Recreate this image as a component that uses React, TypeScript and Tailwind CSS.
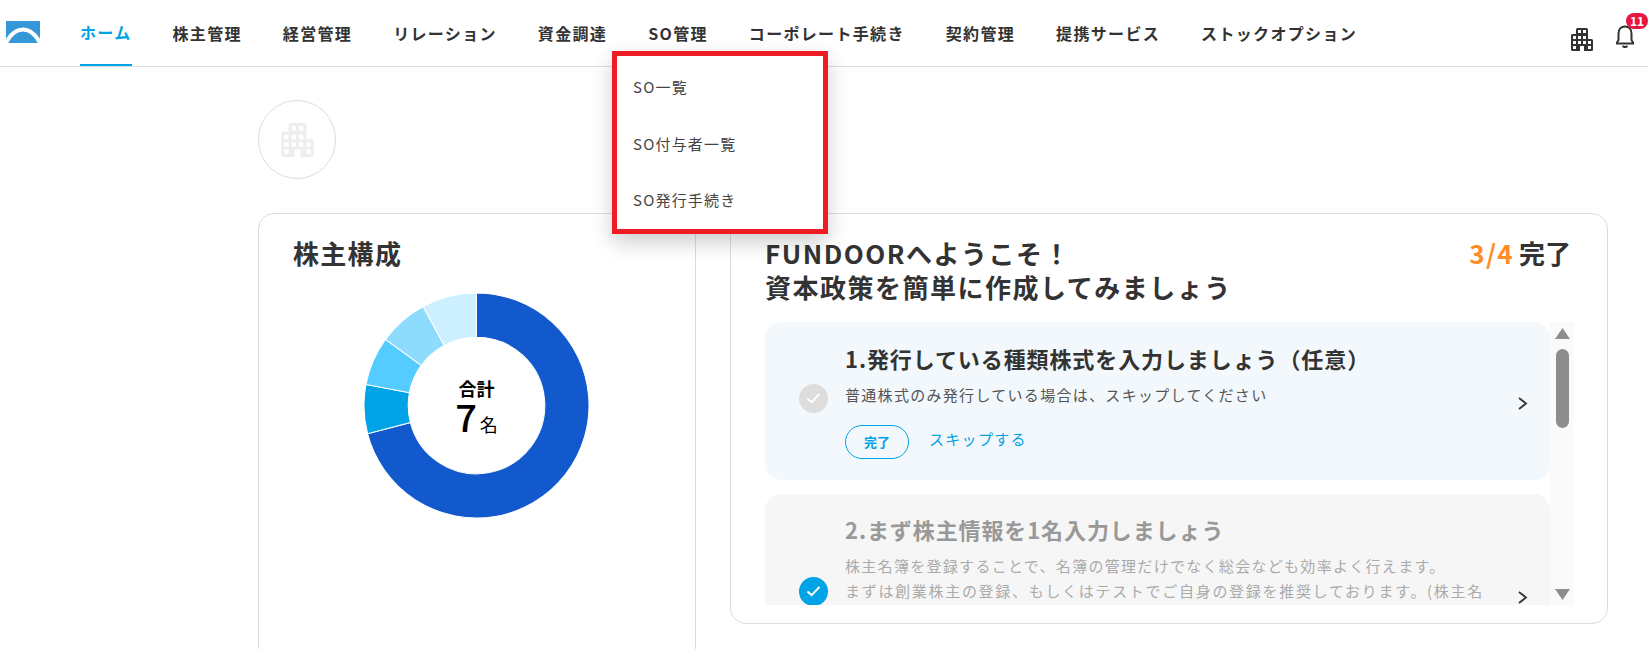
import React from 'react';

const navItems = ['ホーム', '株主管理', '経営管理', 'リレーション', '資金調達', 'SO管理', 'コーポレート手続き', '契約管理', '提携サービス', 'ストックオプション'];

const segments = [
  { from: 0, to: 255.5, color: '#1159cc' },
  { from: 255.5, to: 280.8, color: '#00a3e5' },
  { from: 280.8, to: 306, color: '#55ccff' },
  { from: 306, to: 331.7, color: '#8edcfd' },
  { from: 331.7, to: 360, color: '#ccf0ff' },
];

function arc(from: number, to: number) {
  const c = 112;
  const R = 112;
  const r = 68;
  const pt = (rad: number, deg: number) => {
    const a = ((deg - 90) * Math.PI) / 180;
    return `${(c + rad * Math.cos(a)).toFixed(2)} ${(c + rad * Math.sin(a)).toFixed(2)}`;
  };
  const large = to - from > 180 ? 1 : 0;
  return `M${pt(R, from)} A${R} ${R} 0 ${large} 1 ${pt(R, to)} L${pt(r, to)} A${r} ${r} 0 ${large} 0 ${pt(r, from)} Z`;
}

function BuildingIcon({ color, hole, className }: { color: string; hole: string; className: string }) {
  const windows = [
    [7, 2], [12, 2], [2, 8], [7, 8], [12, 8],
    [2, 13], [7, 13], [12, 13], [17, 13],
  ];
  return (
    <svg viewBox="0 0 22 23" className={className}>
      <rect x="5" y="0" width="12" height="23" rx="1.5" fill={color} />
      <rect x="0" y="6" width="12" height="17" rx="1.5" fill={color} />
      <rect x="10" y="11" width="12" height="12" rx="1.5" fill={color} />
      {windows.map(([x, y]) => (
        <rect key={`${x}-${y}`} x={x} y={y} width="3" height="3" fill={hole} />
      ))}
      <rect x="2" y="18" width="3" height="3" fill={hole} />
      <rect x="17" y="18" width="3" height="3" fill={hole} />
      <rect x="9" y="18" width="4" height="5" fill={hole} />
    </svg>
  );
}

function Chevron({ className }: { className: string }) {
  return (
    <svg viewBox="0 0 10 13" className={className} fill="none" stroke="#333" strokeWidth="1.8">
      <path d="M1 1l7 5.5L1 12" />
    </svg>
  );
}

function CheckCircle({ color }: { color: string }) {
  return (
    <div className={`flex h-[29px] w-[29px] items-center justify-center rounded-full ${color}`}>
      <svg viewBox="0 0 16 13" className="h-[12px] w-[15px]" fill="none" stroke="#fff" strokeWidth="2.2">
        <path d="M1.5 7l4.5 4L14.5 2" />
      </svg>
    </div>
  );
}

export default function App() {
  return (
    <div className="relative h-[649px] w-[1648px] overflow-hidden bg-white font-['Noto_Sans_CJK_JP','Noto_Sans',sans-serif] text-[#333]">
      <header className="flex h-[67px] items-stretch border-b border-[#ddd] pr-[14px]">
        <svg viewBox="0 0 34 22" className="ml-[6px] mt-[21px] h-[22px] w-[34px]">
          <rect width="34" height="22" fill="#3498d8" />
          <path d="M0 22C5 12 11 8.500 17 8.500S29 12 34 22" fill="none" stroke="#fff" strokeWidth="4" />
        </svg>
        <nav className="ml-[40px] flex gap-[41px]">
          {navItems.map((item, i) => (
            <a
              key={item}
              className={`flex h-[66px] items-center text-[16px] font-bold tracking-[1.33px] ${
                i === 0 ? 'border-b-[2px] border-[#00a3e5] text-[#00a3e5]' : ''
              }`}
            >
              {item}
            </a>
          ))}
        </nav>
        <div className="ml-auto flex items-start">
          <BuildingIcon color="#333" hole="#fff" className="mr-[23px] mt-[28px] h-[23px] w-[22px]" />
          <div className="relative mt-[25px] h-[23px] w-[18px]">
            <svg viewBox="0 0 18 23" className="h-[23px] w-[18px]" fill="none" stroke="#333" strokeWidth="2">
              <path d="M9 1.500c-4 0-6.500 3-6.500 7v6.500L1 17.500v1h16v-1l-1.500-2.500V8.500c0-4-2.500-7-6.500-7z" />
              <path d="M6.500 21c1.500 1.300 3.500 1.300 5 0" />
            </svg>
            <span className="absolute left-[10px] top-[-12px] flex h-[16px] w-[22px] items-center justify-center rounded-full bg-[#e8173f] text-[12px] font-bold text-white">
              11
            </span>
          </div>
        </div>
      </header>

      <main className="pl-[258px] pt-[33px]">
        <div className="flex h-[79px] w-[78px] items-center justify-center rounded-full border border-[#ddd]">
          <BuildingIcon color="#eeeeee" hole="#fff" className="h-[34px] w-[33px]" />
        </div>

        <div className="mt-[34px] flex gap-[34px]">
          <section className="h-[600px] w-[438px] rounded-2xl border border-[#ddd] pl-[34px] pt-[19px]">
            <h2 className="text-[26px] font-bold leading-[40px] tracking-[1.3px]">株主構成</h2>
            <div className="relative ml-[71px] mt-[20px] h-[225px] w-[225px]">
              <svg viewBox="0 0 224 224" className="h-[225px] w-[225px]">
                {segments.map((s) => (
                  <path key={s.from} d={arc(s.from, s.to)} fill={s.color} stroke="#fff" strokeWidth="1" />
                ))}
              </svg>
              <div className="absolute inset-0 flex flex-col items-center justify-center pt-[8px] text-black">
                <span className="text-[18px] font-bold leading-[20px]">合計</span>
                <span className="flex items-baseline leading-[36px]">
                  <span className="text-[38px] font-medium">7</span>
                  <span className="ml-[3px] text-[18px]">名</span>
                </span>
              </div>
            </div>
          </section>

          <section className="h-[411px] w-[878px] rounded-2xl border border-[#ddd] pl-[34px] pt-[22px]">
            <div className="flex w-[806px] justify-between">
              <h2 className="text-[26px] font-bold leading-[34px] tracking-[1.5px]">
                FUNDOORへようこそ！
                <br />
                資本政策を簡単に作成してみましょう
              </h2>
              <div className="text-[26px] font-bold leading-[34px]">
                <span className="tracking-[1.3px] text-[#ff8c26]">3/4</span>
                <span className="ml-[5px]">完了</span>
              </div>
            </div>

            <div className="mt-[18px] flex h-[283px] w-[809px] overflow-hidden">
              <div className="flex w-[785px] flex-col gap-[14px]">
                <article className="flex h-[158px] shrink-0 items-center rounded-2xl bg-[#f3f8fc] pl-[34px] pr-[22px]">
                  <div className="mt-[-6px]">
                    <CheckCircle color="bg-[#dddddd]" />
                  </div>
                  <div className="ml-[17px] flex-1 pb-[1px]">
                    <h3 className="text-[22px] font-bold leading-[32px] tracking-[0.9px]">1.発行している種類株式を入力しましょう（任意）</h3>
                    <p className="mt-[9px] text-[15px] leading-[24px] tracking-[1.3px] text-[#555]">普通株式のみ発行している場合は、スキップしてください</p>
                    <div className="mt-[18px] flex items-center">
                      <button className="h-[34px] w-[64px] rounded-full border border-[#00a3e5] text-[13px] font-bold text-[#00a3e5]">完了</button>
                      <a className="ml-[20px] mt-[-6px] text-[15px] tracking-[1.3px] text-[#00a3e5]">スキップする</a>
                    </div>
                  </div>
                  <Chevron className="mt-[4px] h-[13px] w-[10px]" />
                </article>

                <article className="flex h-[200px] shrink-0 items-center rounded-2xl bg-[#f6f6f6] pl-[34px] pr-[22px]">
                  <div className="mt-[-6px]">
                    <CheckCircle color="bg-[#00a3e5]" />
                  </div>
                  <div className="ml-[17px] flex-1">
                    <h3 className="text-[22px] font-bold leading-[32px] tracking-[0.9px] text-[#999]">2.まず株主情報を1名入力しましょう</h3>
                    <p className="mt-[8px] text-[15px] leading-[25px] tracking-[1.3px] text-[#aaa]">
                      株主名簿を登録することで、名簿の管理だけでなく総会なども効率よく行えます。
                      <br />
                      <span className="tracking-[1.7px]">まずは創業株主の登録、もしくはテストでご自身の登録を推奨しております。(株主名</span>
                      <br />
                      簿はいつでも修正できます)
                    </p>
                    <div className="h-[48px]" />
                  </div>
                  <Chevron className="mt-[6px] h-[13px] w-[10px]" />
                </article>
              </div>

              <div className="flex w-[24px] flex-col items-center justify-between bg-[#fafafa] pb-[5px] pt-[6px]">
                <div className="flex flex-col items-center">
                  <svg viewBox="0 0 15 11" className="h-[11px] w-[15px]">
                    <path d="M7.500 0L15 11H0z" fill="#8d8d8d" />
                  </svg>
                  <div className="mt-[10px] h-[79px] w-[13px] rounded-full bg-[#8d8d8d]" />
                </div>
                <svg viewBox="0 0 15 11" className="h-[11px] w-[15px]">
                  <path d="M0 0h15L7.500 11z" fill="#8d8d8d" />
                </svg>
              </div>
            </div>
          </section>
        </div>
      </main>

      <div className="absolute left-[612px] top-[51px] flex h-[183px] w-[216px] flex-col border-[5px] border-[#ee1c25] bg-white pl-[16px] pt-[3px] text-[15px] tracking-[1.2px] text-[#444] shadow-[0_8px_20px_rgba(0,0,0,0.2)]">
        <a className="flex h-[56.5px] shrink-0 items-center">SO一覧</a>
        <a className="flex h-[56.5px] shrink-0 items-center">SO付与者一覧</a>
        <a className="flex h-[56.5px] shrink-0 items-center">SO発行手続き</a>
      </div>
    </div>
  );
}
